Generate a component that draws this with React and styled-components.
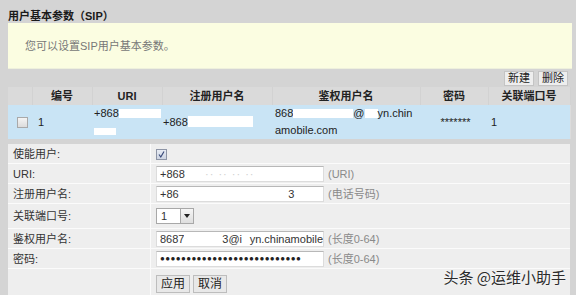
import React from "react";
import styled, { createGlobalStyle, css } from "styled-components";

const GlobalStyle = createGlobalStyle`
  html, body {
    margin: 0;
    padding: 0;
    background: #d4d4d4;
  }
  body {
    font-family: "Liberation Sans", "Noto Sans CJK SC", sans-serif;
    font-size: 11px;
    color: #222;
  }
`;

const Page = styled.div`
  position: relative;
  width: 576px;
  height: 295px;
  padding: 0 4px 0 8px;
  box-sizing: border-box;
  overflow: hidden;
`;

const Title = styled.div`
  height: 23px;
  line-height: 32px;
  font-weight: bold;
  font-size: 11px;
  color: #1a1a1a;
`;

const InfoBox = styled.div`
  height: 46px;
  background: #fbfde1;
  border-bottom: 1px solid #eef0dc;
  padding-left: 17px;
  line-height: 46px;
  color: #777;
  font-size: 11px;
  box-sizing: border-box;
`;

const Toolbar = styled.div`
  display: flex;
  justify-content: flex-end;
  gap: 4px;
  padding: 2px 4px 0 0;
  height: 18px;
  box-sizing: border-box;
`;

const SmallButton = styled.button`
  font-family: inherit;
  font-size: 11px;
  height: 15px;
  padding: 0 3px;
  line-height: 13px;
  background: #eeeeee;
  border: 1px solid #c4c4c4;
  color: #222;
  ${p =>
    p.big &&
    css`
      height: 18px;
      padding: 0 4px;
      font-size: 12px;
      background: #e8e8e8;
      border-color: #bdbdbd;
    `}
`;

const ListTable = styled.table`
  width: 562px;
  border-collapse: collapse;
  table-layout: fixed;
  background: #dcdcdc;
`;

const HeadCell = styled.th`
  height: 18px;
  padding: 0;
  font-weight: bold;
  font-size: 11px;
  line-height: 18px;
  text-align: center;
  background: #dadada;
  border-right: 1px solid #d2d2d2;
`;

const DataRow = styled.tr`
  background: #c9e4f5;
`;

const DataCell = styled.td`
  height: 33px;
  padding: 0 0 0 ${p => p.pad || 3}px;
  font-size: 11px;
  line-height: 17px;
  white-space: nowrap;
  overflow: hidden;
  vertical-align: middle;
  text-align: ${p => (p.center ? "center" : "left")};
`;

const Mask = styled.span`
  display: inline-block;
  vertical-align: -1px;
  width: ${p => p.w}px;
  height: ${p => p.h || 9}px;
  background: #ffffff;
`;

const Check = styled.span`
  display: inline-block;
  width: 9px;
  height: 9px;
  border: 1px solid #a9a9a9;
  background: linear-gradient(#f4f4f4, #dcdcdc);
  vertical-align: middle;
  position: relative;
  ${p =>
    p.checked &&
    css`
      background: linear-gradient(#e8ecf4, #cdd4e2);
      border-color: #8e95a6;
    `}
`;

const Form = styled.table`
  width: 562px;
  margin-top: 5px;
  border-collapse: collapse;
  table-layout: fixed;
  background: #eeeeee;
`;

const FormRow = styled.tr`
  border-bottom: 1px solid #fbfbfb;
`;

const Label = styled.td`
  width: 137px;
  height: ${p => p.h || 19}px;
  padding: 0 0 0 5px;
  border-right: 1px solid #fbfbfb;
  font-size: 11px;
  line-height: 14px;
  color: #333;
`;

const Value = styled.td`
  padding: 0 0 0 ${p => p.pad || 5}px;
  font-size: 11px;
  line-height: 14px;
  color: #333;
  vertical-align: ${p => (p.top ? "top" : "middle")};
`;

const InputBox = styled.span`
  display: inline-flex;
  align-items: center;
  width: 168px;
  height: 16px;
  padding-left: 3px;
  box-sizing: border-box;
  background: #fff;
  border: 1px solid #dcdcdc;
  border-top-color: #b8b8b8;
  vertical-align: middle;
  overflow: hidden;
  white-space: nowrap;
  font-size: 11px;
  color: #333;
`;

const Hint = styled.span`
  margin-left: 4px;
  color: #8a8a8a;
  font-size: 11px;
  vertical-align: middle;
`;

const Faint = styled.span`
  color: #cfcfcf;
  letter-spacing: 1px;
`;

const Select = styled.span`
  display: inline-flex;
  align-items: center;
  width: 38px;
  height: 16px;
  box-sizing: border-box;
  border: 1px solid #a8a8a8;
  background: #fff;
  vertical-align: middle;
`;

const SelectText = styled.span`
  flex: 1;
  padding-left: 4px;
`;

const SelectArrow = styled.span`
  width: 13px;
  height: 14px;
  box-sizing: border-box;
  border-left: 1px solid #a8a8a8;
  background: linear-gradient(#f6f6f6, #dedede);
  display: flex;
  align-items: center;
  justify-content: center;
  &:after {
    content: "";
    border-left: 3px solid transparent;
    border-right: 3px solid transparent;
    border-top: 4px solid #222;
  }
`;

const Dots = styled.span`
  font-size: 8px;
  letter-spacing: 0.4px;
  color: #222;
`;

const ButtonRow = styled.div`
  display: flex;
  gap: 3px;
  padding-top: 6px;
`;

const Watermark = styled.div`
  position: absolute;
  right: 10px;
  bottom: 8px;
  font-family: "Noto Sans CJK SC", sans-serif;
  font-size: 15px;
  color: #2b2b2b;
  text-shadow: 0 0 2px #fff;
`;

const CheckMark = () => (
  <svg width="9" height="9" viewBox="0 0 9 9" style={{ position: "absolute", left: 0, top: 0 }}>
    <path d="M2 4.5 L3.8 7 L7 1.5" fill="none" stroke="#3a4a7a" strokeWidth="1.2" />
  </svg>
);

const fields = [
  { label: "URI:", value: <>+868<Faint>&nbsp;&nbsp;&nbsp;&nbsp;&nbsp;·· ·· ·· ··</Faint></>, hint: "(URI)" },
  { label: "注册用户名:", value: <>+86<Faint>&nbsp;&nbsp;&nbsp;&nbsp;&nbsp;&nbsp;&nbsp;&nbsp;&nbsp;&nbsp;&nbsp;&nbsp;&nbsp;&nbsp;&nbsp;&nbsp;&nbsp;&nbsp;&nbsp;&nbsp;&nbsp;&nbsp;&nbsp;&nbsp;&nbsp;&nbsp;&nbsp;</Faint>3</>, hint: "(电话号码)" },
];

export default function App() {
  return (
    <Page>
      <GlobalStyle />
      <Title>用户基本参数（SIP）</Title>
      <InfoBox>您可以设置SIP用户基本参数。</InfoBox>
      <Toolbar>
        <SmallButton>新建</SmallButton>
        <SmallButton>删除</SmallButton>
      </Toolbar>
      <ListTable>
        <colgroup>
          <col style={{ width: 24 }} />
          <col style={{ width: 60 }} />
          <col style={{ width: 70 }} />
          <col style={{ width: 110 }} />
          <col style={{ width: 148 }} />
          <col style={{ width: 68 }} />
          <col style={{ width: 82 }} />
        </colgroup>
        <thead>
          <tr>
            <HeadCell />
            <HeadCell>编号</HeadCell>
            <HeadCell>URI</HeadCell>
            <HeadCell>注册用户名</HeadCell>
            <HeadCell>鉴权用户名</HeadCell>
            <HeadCell>密码</HeadCell>
            <HeadCell>关联端口号</HeadCell>
          </tr>
        </thead>
        <tbody>
          <DataRow>
            <DataCell pad={9}><Check /></DataCell>
            <DataCell pad={6}>1</DataCell>
            <DataCell pad={2}>
              +868<Mask w={42} />
              <br />
              <Mask w={22} h={7} />
            </DataCell>
            <DataCell pad={1}>+868<Mask w={65} h={11} /></DataCell>
            <DataCell pad={3}>
              868<Mask w={60} />@<Mask w={13} />yn.chin
              <br />
              amobile.com
            </DataCell>
            <DataCell center>*******</DataCell>
            <DataCell pad={3}>1</DataCell>
          </DataRow>
        </tbody>
      </ListTable>
      <Form>
        <tbody>
          <FormRow>
            <Label>使能用户:</Label>
            <Value><Check checked><CheckMark /></Check></Value>
          </FormRow>
          {fields.map(f => (
            <FormRow key={f.label}>
              <Label>{f.label}</Label>
              <Value>
                <InputBox>{f.value}</InputBox>
                <Hint>{f.hint}</Hint>
              </Value>
            </FormRow>
          ))}
          <FormRow>
            <Label h={24}>关联端口号:</Label>
            <Value>
              <Select>
                <SelectText>1</SelectText>
                <SelectArrow />
              </Select>
            </Value>
          </FormRow>
          <FormRow>
            <Label>鉴权用户名:</Label>
            <Value>
              <InputBox>8687<Mask w={50} h={11} />3@i<Mask w={10} h={11} />yn.chinamobile</InputBox>
              <Hint>(长度0-64)</Hint>
            </Value>
          </FormRow>
          <FormRow>
            <Label>密码:</Label>
            <Value>
              <InputBox><Dots>●●●●●●●●●●●●●●●●●●●●●●●●●●●</Dots></InputBox>
              <Hint>(长度0-64)</Hint>
            </Value>
          </FormRow>
          <tr>
            <Label h={30} />
            <Value top>
              <ButtonRow>
                <SmallButton big>应用</SmallButton>
                <SmallButton big>取消</SmallButton>
              </ButtonRow>
            </Value>
          </tr>
        </tbody>
      </Form>
      <Watermark>头条 @运维小助手</Watermark>
    </Page>
  );
}
